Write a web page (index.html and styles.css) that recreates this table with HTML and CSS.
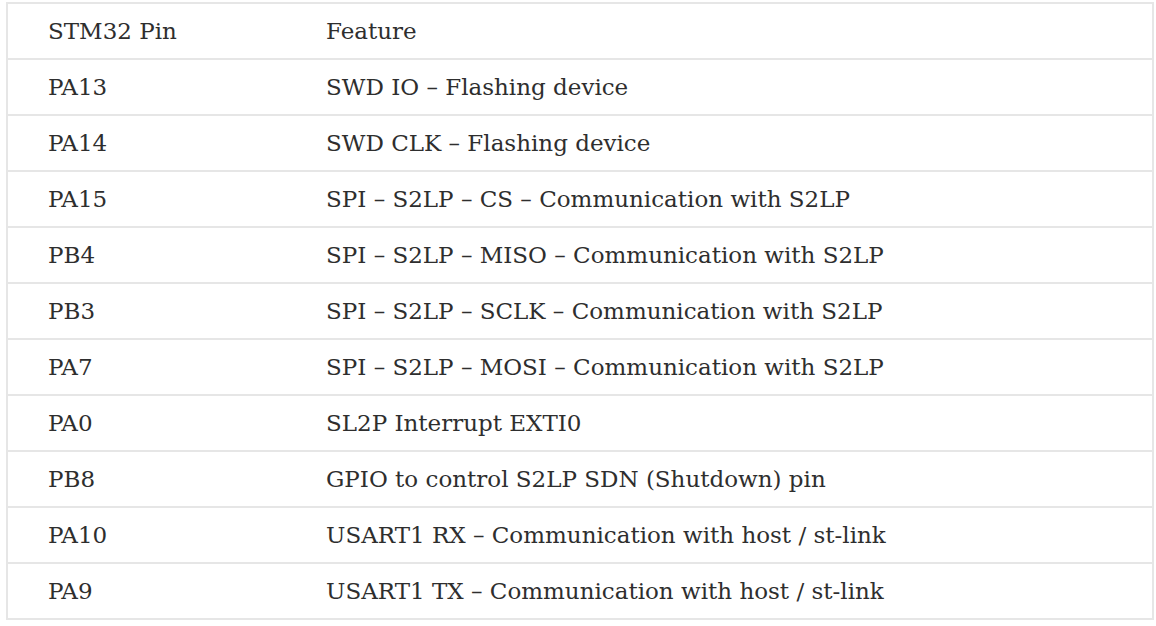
FILE: index.html
```html
<!DOCTYPE html>
<html lang="en">
<head>
<meta charset="utf-8">
<title>STM32 Pins</title>
<link rel="stylesheet" href="styles.css">
</head>
<body>
<table class="pins">
  <thead>
    <tr><th class="pin">STM32 Pin</th><th class="feat">Feature</th></tr>
  </thead>
  <tbody>
    <tr><td class="pin">PA13</td><td class="feat">SWD IO – Flashing device</td></tr>
    <tr><td class="pin">PA14</td><td class="feat">SWD CLK – Flashing device</td></tr>
    <tr><td class="pin">PA15</td><td class="feat">SPI – S2LP – CS – Communication with S2LP</td></tr>
    <tr><td class="pin">PB4</td><td class="feat">SPI – S2LP – MISO – Communication with S2LP</td></tr>
    <tr><td class="pin">PB3</td><td class="feat">SPI – S2LP – SCLK – Communication with S2LP</td></tr>
    <tr><td class="pin">PA7</td><td class="feat">SPI – S2LP – MOSI – Communication with S2LP</td></tr>
    <tr><td class="pin">PA0</td><td class="feat">SL2P Interrupt EXTI0</td></tr>
    <tr><td class="pin">PB8</td><td class="feat">GPIO to control S2LP SDN (Shutdown) pin</td></tr>
    <tr><td class="pin">PA10</td><td class="feat">USART1 RX – Communication with host / st-link</td></tr>
    <tr><td class="pin">PA9</td><td class="feat">USART1 TX – Communication with host / st-link</td></tr>
  </tbody>
</table>
</body>
</html>
```
FILE: styles.css
```css
html, body {
  margin: 0;
  padding: 0;
  background: #ffffff;
}

.pins {
  box-sizing: border-box;
  margin: 2px 0 0 6px;
  width: 1148px;
  border: 2px solid #e6e6e6;
  border-collapse: separate;
  border-spacing: 0;
  table-layout: fixed;
  font-family: "DejaVu Serif", "Liberation Serif", serif;
  font-size: 23px;
  color: #2e2e2e;
}

.pins th,
.pins td {
  box-sizing: border-box;
  height: 54px;
  padding: 0 40px;
  line-height: 54px;
  text-align: left;
  font-weight: normal;
  vertical-align: middle;
  white-space: nowrap;
}

.pins tbody td {
  height: 56px;
  border-top: 2px solid #e6e6e6;
}

.pins .pin {
  width: 278px;
}
```
